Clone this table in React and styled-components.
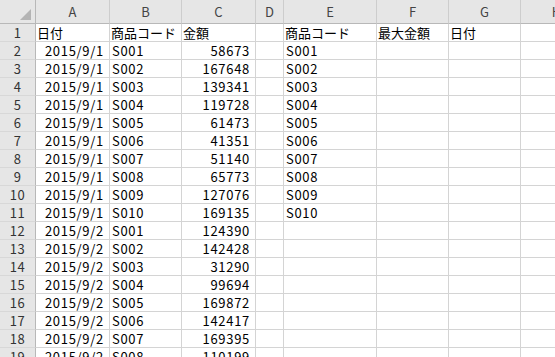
import React from 'react';
import styled, { createGlobalStyle } from 'styled-components';

const GlobalStyle = createGlobalStyle`
  html, body {
    margin: 0;
    padding: 0;
    background: #ffffff;
    overflow: hidden;
  }
`;

const columns = ['A', 'B', 'C', 'D', 'E', 'F', 'G', 'H'];

const amounts1 = [58673, 167648, 139341, 119728, 61473, 41351, 51140, 65773, 127076, 169135];
const amounts2 = [124390, 142428, 31290, 99694, 169872, 142417, 169395, 110199];

const code = (i) => `S0${String(i + 1).padStart(2, '0')}`;

// sheet rows, columns A..H
const rows = [
  ['日付', '商品コード', '金額', '', '商品コード', '最大金額', '日付', ''],
  ...amounts1.map((amt, i) => ['2015/9/1', code(i), amt, '', code(i), '', '', '']),
  ...amounts2.map((amt, i) => ['2015/9/2', code(i), amt, '', '', '', '', '']),
];

const App = () => {
  return (
    <>
      <GlobalStyle />
      <Sheet>
        <Corner>
          <CornerMark />
        </Corner>
        {columns.map((c) => (
          <ColHeader key={c}>{c}</ColHeader>
        ))}
        {rows.map((row, r) => (
          <React.Fragment key={r}>
            <RowHeader>{r + 1}</RowHeader>
            {row.map((val, c) => {
              const isTitle = r === 0;
              const rightAlign = !isTitle && (c === 0 || c === 2);
              return (
                <Cell key={c} $right={rightAlign} $jp={isTitle}>
                  {val}
                </Cell>
              );
            })}
          </React.Fragment>
        ))}
      </Sheet>
    </>
  );
};

export default App;

const Sheet = styled.div`
  display: grid;
  grid-template-columns: 36px 74px 72px 74px 28px 93px 72px 72px 72px;
  grid-template-rows: 24px;
  grid-auto-rows: 18px;
  width: 555px;
  height: 357px;
  overflow: hidden;
  font-family: "Noto Sans CJK JP", "Noto Sans", sans-serif;
  color: #000;
`;

const Corner = styled.div`
  position: relative;
  background: #e6e6e6;
  border-right: 1px solid #b8b8b8;
  border-bottom: 1px solid #b8b8b8;
  box-sizing: border-box;
`;

const CornerMark = styled.div`
  position: absolute;
  right: 4px;
  bottom: 3px;
  width: 0;
  height: 0;
  border-left: 11px solid transparent;
  border-bottom: 11px solid #b4b4b4;
`;

const ColHeader = styled.div`
  background: #e6e6e6;
  border-right: 1px solid #cdcdcd;
  border-bottom: 1px solid #b8b8b8;
  box-sizing: border-box;
  text-align: center;
  line-height: 24px;
  font-size: 13px;
  color: #444;
  white-space: nowrap;
`;

const RowHeader = styled.div`
  background: #e6e6e6;
  border-right: 1px solid #b8b8b8;
  border-bottom: 1px solid #d8d8d8;
  box-sizing: border-box;
  text-align: center;
  line-height: 17px;
  font-size: 13px;
  letter-spacing: 0.5px;
  color: #333;
`;

const Cell = styled.div`
  border-right: 1px solid #d4d4d4;
  border-bottom: 1px solid #d4d4d4;
  box-sizing: border-box;
  padding: 0 ${(p) => (p.$right ? '5px' : '0')} 0 ${(p) => (p.$jp ? '1px' : '2px')};
  text-align: ${(p) => (p.$right ? 'right' : 'left')};
  font-size: ${(p) => (p.$jp ? '13px' : '13px')};
  letter-spacing: ${(p) => (p.$jp ? '0' : '0.7px')};
  line-height: 17px;
  white-space: nowrap;
`;
